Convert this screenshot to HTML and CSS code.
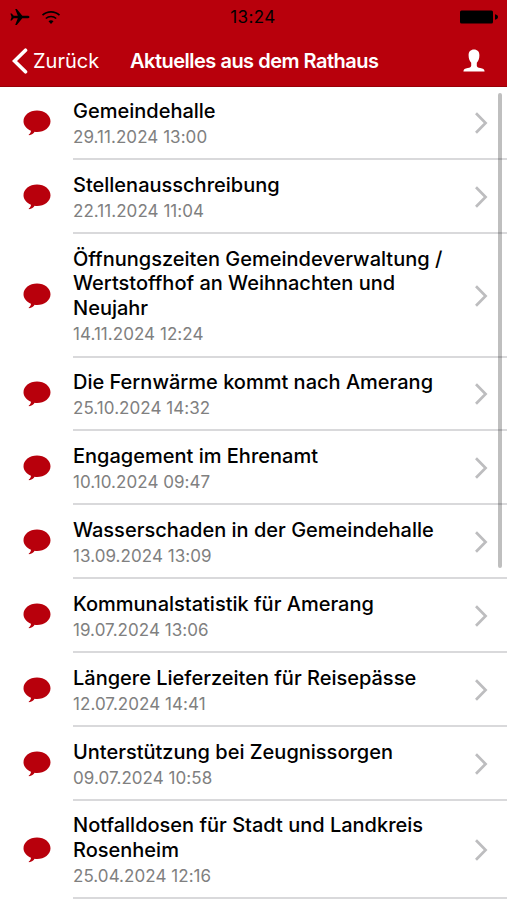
FILE: index.html
```
<!DOCTYPE html>
<html lang="de">
<head>
    <meta charset="UTF-8">
    <meta name="viewport" content="width=device-width, initial-scale=1.0">
    <title>Aktuelles aus dem Rathaus</title>
    <link rel="stylesheet" href="styles.css">
</head>
<body>

    <!-- Shared icons -->
    <svg class="sprite" width="0" height="0">
        <symbol id="bubble" viewBox="0 0 28 26">
            <path d="M14 .5C21.500 .5 27.500 5.200 27.500 11.300S21.500 22 14 22c-.8 0-1.600 0-2.400-.2C10.600 23.600 8.700 25 6 25.200c-.4 0-.5-.5-.1-.7 1.400-.9 2-2.200 2.100-3.700C3.500 19 .5 15.400 .5 11.300 .5 5.200 6.500 .5 14 .5z"/>
        </symbol>
        <symbol id="chevron" viewBox="0 0 14 22">
            <path d="M2 1.200 11.600 11 2 20.800" fill="none" stroke="#bdbdbf" stroke-width="2.700"/>
        </symbol>
    </svg>

    <header class="header">
        <div class="status-bar">
            <div class="status-left">
                <svg class="plane" width="20" height="18" viewBox="0 0 20 18">
                    <path d="M19.500 9c0-.8-1-1.300-2.200-1.300h-5L6.800 1H5.200l2.600 6.700H3.700L1.700 5.400H.4L1.600 9 .4 12.600h1.300l2-2.300h4.100L5.200 17h1.600l5.500-6.700h5c1.200 0 2.200-.5 2.200-1.300z"/>
                </svg>
                <svg class="wifi" width="20" height="15" viewBox="0 0 20 15">
                    <path d="M1.500 5.200C6.200 .7 13.800 .7 18.500 5.200M4.800 8.500c3-2.700 7.400-2.700 10.400 0" fill="none" stroke="#000" stroke-width="1.600"/>
                    <path d="M10 14 7.500 11.300c1.400-1.300 3.600-1.300 5 0z"/>
                </svg>
            </div>
            <span class="time">13:24</span>
            <svg class="battery" width="40" height="14" viewBox="0 0 40 14">
                <rect x="1" y=".5" width="33" height="13" rx="1.500"/>
                <path d="M36 4.300c2 .4 3 1.500 3 2.700s-1 2.300-3 2.700z"/>
            </svg>
        </div>
        <div class="nav-bar">
            <a class="back" href="#">
                <svg width="16" height="26" viewBox="0 0 16 26">
                    <path d="M13.500 2.200 2.500 13l11 10.800" fill="none" stroke="#fff" stroke-width="3.600" stroke-linecap="round"/>
                </svg>
                <span class="back-label">Zurück</span>
            </a>
            <h1 class="title">Aktuelles aus dem Rathaus</h1>
            <svg class="user" width="22" height="23" viewBox="0 0 22 23">
                <path d="M11 .5c3.400 0 5.400 2.200 5.400 5.700 0 3.200-.9 5.800-2.600 7.600v3c0 1.300 1.200 1.900 3.500 2.300 2.800.5 4.100 1.300 4.300 3.500H.4c.2-2.200 1.500-3 4.300-3.500 2.300-.4 3.500-1 3.500-2.300v-3C6.500 12 5.600 9.400 5.600 6.200 5.600 2.700 7.600 .5 11 .5z"/>
            </svg>
        </div>
    </header>

    <ul class="list">
        <li class="item">
            <svg class="bubble"><use href="#bubble"/></svg>
            <div class="content">
                <div class="text"><h2>Gemeindehalle</h2><p>29.11.2024 13:00</p></div>
                <svg class="chevron"><use href="#chevron"/></svg>
            </div>
        </li>
        <li class="item">
            <svg class="bubble"><use href="#bubble"/></svg>
            <div class="content">
                <div class="text"><h2>Stellenausschreibung</h2><p>22.11.2024 11:04</p></div>
                <svg class="chevron"><use href="#chevron"/></svg>
            </div>
        </li>
        <li class="item">
            <svg class="bubble"><use href="#bubble"/></svg>
            <div class="content">
                <div class="text"><h2>Öffnungszeiten Gemeindeverwaltung /<br>Wertstoffhof an Weihnachten und<br>Neujahr</h2><p>14.11.2024 12:24</p></div>
                <svg class="chevron"><use href="#chevron"/></svg>
            </div>
        </li>
        <li class="item">
            <svg class="bubble"><use href="#bubble"/></svg>
            <div class="content">
                <div class="text"><h2>Die Fernwärme kommt nach Amerang</h2><p>25.10.2024 14:32</p></div>
                <svg class="chevron"><use href="#chevron"/></svg>
            </div>
        </li>
        <li class="item">
            <svg class="bubble"><use href="#bubble"/></svg>
            <div class="content">
                <div class="text"><h2>Engagement im Ehrenamt</h2><p>10.10.2024 09:47</p></div>
                <svg class="chevron"><use href="#chevron"/></svg>
            </div>
        </li>
        <li class="item">
            <svg class="bubble"><use href="#bubble"/></svg>
            <div class="content">
                <div class="text"><h2>Wasserschaden in der Gemeindehalle</h2><p>13.09.2024 13:09</p></div>
                <svg class="chevron"><use href="#chevron"/></svg>
            </div>
        </li>
        <li class="item">
            <svg class="bubble"><use href="#bubble"/></svg>
            <div class="content">
                <div class="text"><h2>Kommunalstatistik für Amerang</h2><p>19.07.2024 13:06</p></div>
                <svg class="chevron"><use href="#chevron"/></svg>
            </div>
        </li>
        <li class="item">
            <svg class="bubble"><use href="#bubble"/></svg>
            <div class="content">
                <div class="text"><h2>Längere Lieferzeiten für Reisepässe</h2><p>12.07.2024 14:41</p></div>
                <svg class="chevron"><use href="#chevron"/></svg>
            </div>
        </li>
        <li class="item">
            <svg class="bubble"><use href="#bubble"/></svg>
            <div class="content">
                <div class="text"><h2>Unterstützung bei Zeugnissorgen</h2><p>09.07.2024 10:58</p></div>
                <svg class="chevron"><use href="#chevron"/></svg>
            </div>
        </li>
        <li class="item">
            <svg class="bubble"><use href="#bubble"/></svg>
            <div class="content">
                <div class="text"><h2>Notfalldosen für Stadt und Landkreis<br>Rosenheim</h2><p>25.04.2024 12:16</p></div>
                <svg class="chevron"><use href="#chevron"/></svg>
            </div>
        </li>
    </ul>

    <div class="scrollbar"></div>

</body>
</html>
```
FILE: styles.css
```
* {
    box-sizing: border-box;
}
body {
    font-family: Inter, "Liberation Sans", sans-serif;
    background-color: #fff;
    margin: 0;
    height: 900px;
    overflow: hidden;
}
h1, h2, p, ul {
    margin: 0;
    padding: 0;
}
svg {
    display: block;
    flex-shrink: 0;
}
.sprite {
    display: none;
}
.header {
    height: 87px;
    background-color: #b8000c;
    border-bottom: 1px solid #990008;
}
.status-bar {
    display: grid;
    grid-template-columns: 1fr auto 1fr;
    align-items: center;
    height: 34px;
    padding: 0 8px 0 10px;
}
.status-left {
    display: flex;
    align-items: center;
    gap: 11px;
}
.time {
    margin-right: 3px;
    font-size: 17px;
    letter-spacing: 0.4px;
}
.battery {
    justify-self: end;
}
.nav-bar {
    display: grid;
    grid-template-columns: 118px 1fr 22px;
    align-items: center;
    height: 53px;
    padding: 0 22px 0 12px;
    color: #fff;
}
.back {
    display: flex;
    align-items: center;
    gap: 5px;
    color: #fff;
    text-decoration: none;
}
.back-label {
    font-size: 20px;
}
.title {
    font-size: 20px;
    font-weight: 600;
    letter-spacing: -0.5px;
    white-space: nowrap;
}
.user {
    fill: #fff;
}
.list {
    list-style: none;
    margin-top: -0.700px;
}
.item {
    display: flex;
    align-items: center;
    padding-left: 23px;
}
.bubble {
    width: 28px;
    height: 26px;
    margin-right: 22px;
    fill: #b8000c;
}
.content {
    flex: 1;
    display: flex;
    align-items: center;
    justify-content: space-between;
    padding: 12.600px 19px 8.700px 0;
    border-bottom: 2px solid #d9d9db;
}
.text h2 {
    font-size: 20px;
    font-weight: 500;
    line-height: 24.800px;
    white-space: nowrap;
}
.text p {
    padding-top: 1.400px;
    font-size: 17px;
    line-height: 24.400px;
    letter-spacing: 0.050px;
    color: #808080;
}
.chevron {
    width: 14px;
    height: 22px;
    margin-top: -2px;
}
.scrollbar {
    position: absolute;
    top: 93px;
    right: 5px;
    width: 4px;
    height: 475px;
    border-radius: 2px;
    background-color: rgba(0, 0, 0, 0.25);
}
```
